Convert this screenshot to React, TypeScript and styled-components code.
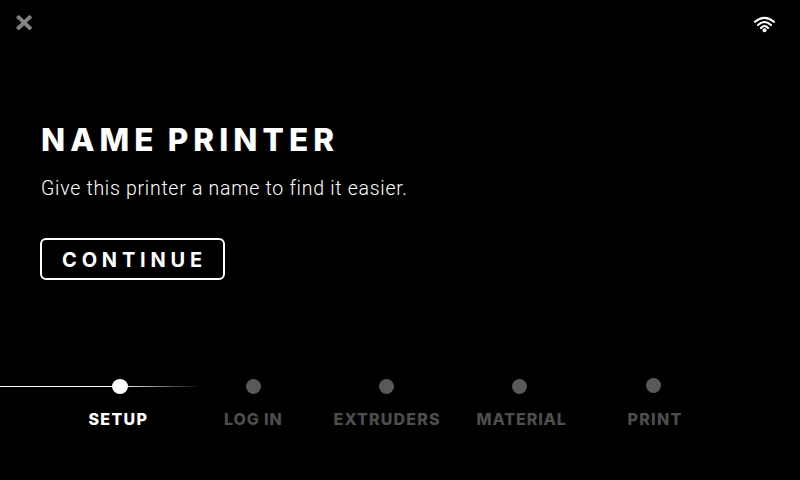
import React from "react";
import styled, { createGlobalStyle } from "styled-components";

const GlobalStyle = createGlobalStyle`
  html, body { margin: 0; background: #000; }
`;

const Screen = styled.main`
  box-sizing: border-box;
  width: 800px;
  height: 480px;
  overflow: hidden;
  display: flex;
  flex-direction: column;
  background: #000;
  color: #fff;
  font-family: Inter, "Liberation Sans", sans-serif;
`;

const TopBar = styled.header`
  height: 48px;
  box-sizing: border-box;
  padding: 15px 24px 0 16px;
  display: flex;
  justify-content: space-between;
  align-items: flex-start;
`;

const CloseButton = styled.button`
  padding: 0;
  border: 0;
  background: none;
  line-height: 0;
  color: #848484;
`;

const Content = styled.section`
  flex: 1;
  padding: 73px 0 0 41px;
  display: flex;
  flex-direction: column;
  align-items: flex-start;
`;

const Title = styled.h1`
  margin: 0;
  font-size: 31.5px;
  line-height: 38px;
  font-weight: 800;
  letter-spacing: 5.1px;
  word-spacing: -3px;
  white-space: nowrap;
`;

const Description = styled.p`
  margin: 16.5px 0 0;
  font-family: Roboto, sans-serif;
  font-size: 19.5px;
  line-height: 26px;
  font-weight: 300;
  letter-spacing: 0.72px;
  white-space: nowrap;
`;

const ContinueButton = styled.button`
  box-sizing: border-box;
  width: 185px;
  height: 42px;
  margin: 36.5px 0 0 -1px;
  padding: 2px 0 0 4px;
  border: 2px solid #fff;
  border-radius: 6px;
  background: none;
  color: #fff;
  font-family: inherit;
  font-size: 20px;
  font-weight: 700;
  letter-spacing: 4.8px;
`;

const Steps = styled.ol`
  margin: 0;
  padding: 0;
  height: 103px;
  list-style: none;
  display: grid;
  grid-template-columns: 186.5px 133.5px 133px 134px 213px;
  background: linear-gradient(90deg, #fff 0, #fff 120px, #000 200px) 0 9px / 200px 1px no-repeat;
`;

const Step = styled.li<{ $shift: number }>`
  display: flex;
  flex-direction: column;
  align-items: flex-start;
  padding-left: ${(p) => p.$shift}px;
`;

const Dot = styled.span<{ $active?: boolean; $left: number; $raise?: boolean }>`
  width: ${(p) => (p.$active ? 16 : 15)}px;
  height: 15px;
  margin: ${(p) => (p.$raise ? 1 : 2)}px 0 ${(p) => (p.$raise ? 16 : 15)}px ${(p) => p.$left}px;
  border-radius: 50%;
  background: ${(p) => (p.$active ? "#fff" : "#595959")};
`;

const Label = styled.span<{ $active?: boolean; $spacing: number }>`
  font-size: 16px;
  line-height: 20px;
  font-weight: 800;
  white-space: nowrap;
  letter-spacing: ${(p) => p.$spacing}px;
  color: ${(p) => (p.$active ? "#fff" : "#4d4d4d")};
`;

const steps = [
  { label: "SETUP", shift: 88.5, left: 23.5, spacing: 1.3, active: true },
  { label: "LOG IN", shift: 37.5, left: 22, spacing: 0.9 },
  { label: "EXTRUDERS", shift: 13.5, left: 45.5, spacing: 1.15 },
  { label: "MATERIAL", shift: 23.5, left: 35.5, spacing: 0.9 },
  { label: "PRINT", shift: 40.5, left: 18.5, spacing: 1.3, raise: true },
];

export default function App() {
  return (
    <>
      <GlobalStyle />
      <Screen>
        <TopBar>
          <CloseButton aria-label="Close">
            <svg width="17" height="16" viewBox="0 0 17 16" fill="currentColor" stroke="currentColor" strokeWidth="1.2" strokeLinejoin="round">
              <path d="M.8 2.4 2.7.7 8.1 5.7 13.5.7 15.4 2.4 10 7.6 15.4 12.8 13.5 14.5 8.1 9.5 2.7 14.5.8 12.8 6.2 7.6Z" />
            </svg>
          </CloseButton>
          <svg width="23" height="18" viewBox="0 0 23 18" fill="none" stroke="#fff" strokeWidth="2.1" strokeLinecap="round">
            <path d="M2 6.8Q11.5-1.1 21 6.8M5 10Q11.5 4 18 10M8 13Q11.5 9.1 15 13" />
            <circle cx="11.5" cy="15.2" r="2" fill="#fff" stroke="none" />
          </svg>
        </TopBar>
        <Content>
          <Title>NAME PRINTER</Title>
          <Description>Give this printer a name to find it easier.</Description>
          <ContinueButton>CONTINUE</ContinueButton>
        </Content>
        <Steps>
          {steps.map((s) => (
            <Step key={s.label} $shift={s.shift}>
              <Dot $active={s.active} $left={s.left} $raise={s.raise} />
              <Label $active={s.active} $spacing={s.spacing}>{s.label}</Label>
            </Step>
          ))}
        </Steps>
      </Screen>
    </>
  );
}
